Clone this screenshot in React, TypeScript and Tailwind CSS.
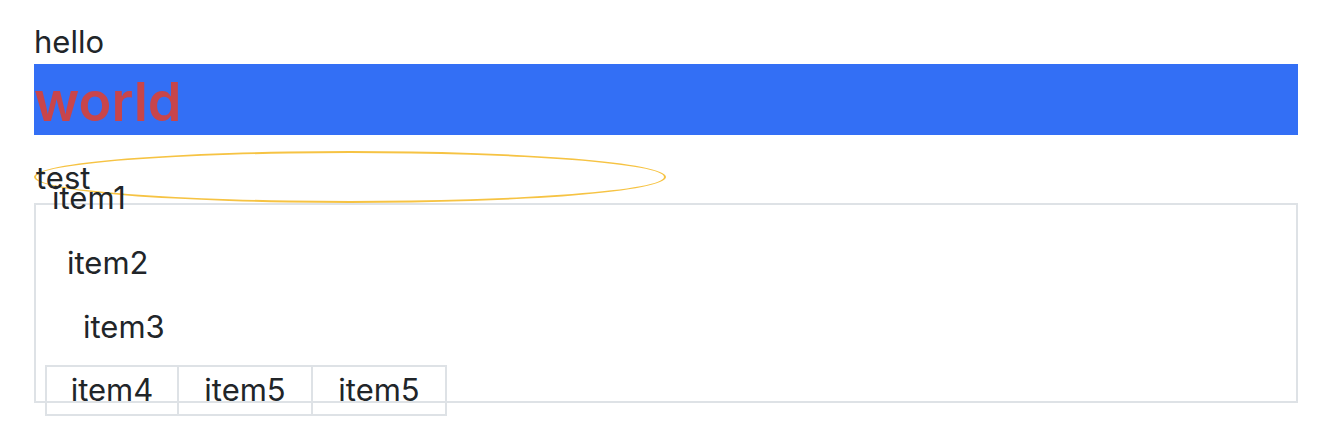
export default function App() {
  return (
    <div className="min-h-[438px] pl-[34px] pt-[20px] font-['Inter','Liberation_Sans',sans-serif] text-[31px] text-[#212529]">
      <div className="w-[1264px]">
        <div className="leading-[44px]">hello</div>
        <div className="h-[71px] bg-[#336ff5] pt-[4px] text-[54px] leading-[67px] font-semibold text-[#c8454b]">world</div>
        <div className="mt-[16px] flex h-[52px] w-1/2 items-center rounded-[50%] border-2 border-[#f6c343] leading-[39px]">
          test
        </div>
        <div className="h-[200px] border-2 border-[#dee2e6]">
          <div className="-mt-[27px] ml-[16px] leading-[39px]">item1</div>
          <div className="mt-[26px] ml-[31px] leading-[39px]">item2</div>
          <div className="mt-[25px] ml-[47px] leading-[39px]">item3</div>
          <div className="mt-[19px] ml-[9px] flex">
            <div className="w-[134px] border-2 border-[#dee2e6] pt-[3px] pb-[5px] text-center leading-[39px]">item4</div>
            <div className="w-[134px] border-2 border-l-0 border-[#dee2e6] pt-[3px] pb-[5px] text-center leading-[39px]">item5</div>
            <div className="w-[134px] border-2 border-l-0 border-[#dee2e6] pt-[3px] pb-[5px] text-center leading-[39px]">item5</div>
          </div>
        </div>
      </div>
    </div>
  );
}
